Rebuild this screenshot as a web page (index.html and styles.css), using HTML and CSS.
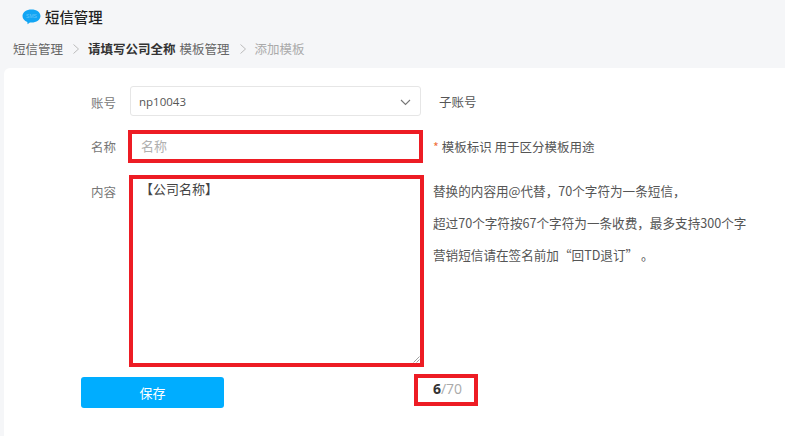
FILE: index.html
```html
<!DOCTYPE html>
<html lang="zh">
<head>
<meta charset="utf-8">
<title>短信管理</title>
<link rel="stylesheet" href="styles.css">
</head>
<body>
<header class="head">
  <svg class="logo" width="19" height="16" viewBox="0 0 19 16" aria-hidden="true">
    <path d="M9.5 0.5C14.5 0.5 18.5 3.2 18.5 7C18.5 10.8 14.5 13.5 9.5 13.5C8.9 13.5 8.4 13.5 7.9 13.4L5.6 15.2L5.3 12.9C2.4 11.9 0.5 9.7 0.5 7C0.5 3.2 4.5 0.5 9.5 0.5Z" fill="#12a5f4"/>
    <text x="9.5" y="8.8" text-anchor="middle" class="logo-text">SMS</text>
  </svg>
  <h1 class="title">短信管理</h1>
</header>
<nav class="crumbs">
  <span>短信管理</span>
  <svg class="sep" width="8" height="12" viewBox="0 0 8 12" aria-hidden="true"><path d="M1.5 1.5L6.5 6L1.5 10.5" fill="none" stroke="#bcbcbc" stroke-width="1"/></svg>
  <strong class="company">请填写公司全称</strong>
  <span class="mgmt">模板管理</span>
  <svg class="sep" width="8" height="12" viewBox="0 0 8 12" aria-hidden="true"><path d="M1.5 1.5L6.5 6L1.5 10.5" fill="none" stroke="#bcbcbc" stroke-width="1"/></svg>
  <span class="current">添加模板</span>
</nav>
<main class="card">
  <div class="row row-account">
    <label class="label">账号</label>
    <div class="select">
      <span>np10043</span>
      <svg width="11" height="7" viewBox="0 0 11 7" aria-hidden="true"><path d="M1 1L5.5 5.5L10 1" fill="none" stroke="#777" stroke-width="1.1"/></svg>
    </div>
    <span class="aside aside-sub">子账号</span>
  </div>
  <div class="row row-name">
    <label class="label">名称</label>
    <div class="name-box">名称</div>
    <span class="aside"><span class="star">*</span> 模板标识 用于区分模板用途</span>
  </div>
  <div class="row row-content">
    <label class="label label-top">内容</label>
    <div class="content-box">【公司名称】
      <svg class="grip" width="7" height="7" viewBox="0 0 7 7" aria-hidden="true"><path d="M0.5 6.5L6.5 0.5M3.5 6.5L6.5 3.5" stroke="#888" stroke-width="0.8"/></svg>
    </div>
    <div class="notes">
      <p>替换的内容用@代替，70个字符为一条短信，</p>
      <p>超过70个字符按67个字符为一条收费，最多支持300个字</p>
      <p>营销短信请在签名前加“回TD退订” 。</p>
    </div>
  </div>
  <div class="row row-foot">
    <button class="save" type="button">保存</button>
    <div class="count"><b>6</b>/70</div>
  </div>
</main>
</body>
</html>
```
FILE: styles.css
```css
* { box-sizing: border-box; }
html, body { height: 100%; }
body {
  margin: 0;
  height: 436px;
  overflow: hidden;
  display: flex;
  flex-direction: column;
  background: #f5f6f8;
  color: #555;
  font: 12.5px/18px "Noto Sans CJK SC", "Liberation Sans", sans-serif;
}
.head {
  display: flex;
  align-items: center;
  gap: 4px;
  height: 33px;
  padding-left: 22px;
}
.logo-text { font: 5px "Liberation Sans", sans-serif; fill: #6cc6f8; }
.title { margin: 0; font-size: 14.4px; font-weight: 500; color: #222; line-height: 20px; }
.crumbs {
  display: flex;
  align-items: center;
  height: 35px;
  padding: 0 0 4px 13px;
  color: #666;
}
.sep { margin: 0 8px 0 9px; }
.company { font-weight: 700; color: #333; }
.mgmt { margin-left: 4px; }
.current { color: #aaa; }
.card {
  flex: 1;
  margin-left: 4px;
  padding: 18px 0 0 76px;
  background: #fff;
  border-radius: 6px 0 0 0;
}
.row { display: flex; }
.label { width: 36px; color: #777; text-align: right; }
.row-account { align-items: center; height: 30px; }
.row-account .label { padding-top: 3px; }
.select {
  display: flex;
  align-items: center;
  justify-content: space-between;
  width: 291px;
  height: 30px;
  margin-left: 14px;
  padding: 2px 9px 0 8px;
  border: 1px solid #e6e6e6;
  border-radius: 3px;
  font-family: "Open Sans", "Liberation Sans", sans-serif;
  font-size: 11.5px;
  color: #555;
}
.aside { color: #555; margin-left: 10px; }
.aside-sub { margin-left: 18px; padding-top: 1px; }
.star { color: #f0703c; }
.row-name { align-items: center; height: 33px; margin-top: 14px; }
.name-box {
  width: 295px;
  height: 33px;
  margin-left: 12px;
  padding: 0 9px;
  font-size: 13px;
  line-height: 24px;
  border: 4px solid #ed1c24;
  color: #b0b0b0;
}
.row-content { margin-top: 12px; align-items: flex-start; }
.label-top { margin-top: 8px; }
.content-box {
  position: relative;
  width: 295px;
  height: 192px;
  margin-left: 13px;
  padding: 1px 7px;
  font-size: 13px;
  border: 4px solid #ed1c24;
  color: #444;
}
.grip { position: absolute; right: 0; bottom: 0; }
.notes { margin-left: 9px; padding-top: 7px; font-size: 12.6px; }
.notes p { margin: 0 0 14px; white-space: nowrap; }
.notes p + p { margin-top: 14px; }
.row-foot { align-items: flex-start; margin-top: 7px; }
.save {
  width: 143px;
  height: 31px;
  margin: 3px 0 0 1px;
  padding: 0;
  border: 0;
  border-radius: 3px;
  background: #00adff;
  color: #fff;
  font: inherit;
  font-size: 13px;
}
.count {
  width: 64px;
  height: 32px;
  margin-left: 190px;
  padding-left: 3px;
  border: 4px solid #ed1c24;
  text-align: center;
  line-height: 21px;
  color: #aaa;
  font-family: "Open Sans", "Liberation Sans", sans-serif;
  font-size: 14px;
}
.count b { color: #333; }
```
